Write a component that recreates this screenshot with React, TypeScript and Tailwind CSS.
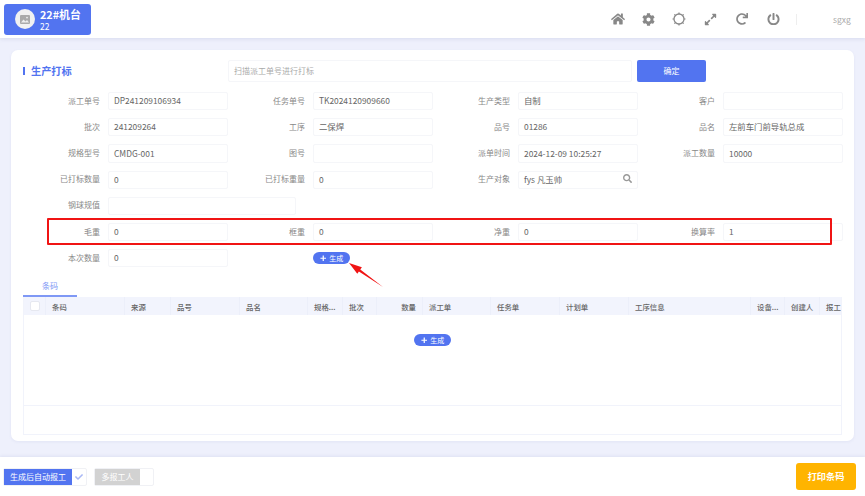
import { FaHome, FaCog, FaExpandAlt, FaRedo, FaPowerOff, FaPlus, FaSearch, FaCheck } from 'react-icons/fa'

const rows = [
  [['派工单号', 'DP241209106934'], ['任务单号', 'TK2024120909660'], ['生产类型', '自制'], ['客户', '']],
  [['批次', '241209264'], ['工序', '二保焊'], ['品号', '01286'], ['品名', '左前车门前导轨总成']],
  [['规格型号', 'CMDG-001'], ['图号', ''], ['派单时间', '2024-12-09 10:25:27'], ['派工数量', '10000']],
  [['已打标数量', '0'], ['已打标重量', '0'], ['生产对象', 'fys 凡玉帅'], null],
]

const weights = [['毛重', '0'], ['框重', '0'], ['净重', '0'], ['换算率', '1']]

const columns = [
  { name: '条码', width: 'w-[79px]' },
  { name: '来源', width: 'w-[46px]' },
  { name: '品号', width: 'w-[69px]' },
  { name: '品名', width: 'w-[68px]' },
  { name: '规格...', width: 'w-[35px]' },
  { name: '批次', width: 'w-[34px]' },
  { name: '数量', width: 'w-[46px]', right: true },
  { name: '派工单', width: 'w-[68px]' },
  { name: '任务单', width: 'w-[69px]' },
  { name: '计划单', width: 'w-[69px]' },
  { name: '工序信息', width: 'w-[122px]' },
  { name: '设备...', width: 'w-[34px]' },
  { name: '创建人', width: 'w-[35px]' },
  { name: '报工人', width: 'flex-1' },
]

function Field({ label, value, search }: { label: string; value: string; search?: boolean }) {
  return (
    <div className="flex items-center h-[18.2px]">
      <div className="w-[85px] pr-[8px] pb-[1px] text-right text-[8px] text-[#888] whitespace-nowrap">{label}</div>
      <div className="relative w-[120px] h-full flex items-center pl-[5px] pb-[1px] bg-white border border-[#f5f6f9] rounded-[2px] text-[#666]">
        {value}
        {search && <FaSearch className="absolute right-[5px] top-[2px] text-[9px] text-[#999]" />}
      </div>
    </div>
  )
}

function GenerateButton() {
  return (
    <button className="w-[37px] h-[12px] flex items-center justify-center gap-[3px] rounded-full bg-[#5274f0] text-white text-[7px]">
      <FaPlus className="text-[6.5px]" />
      生成
    </button>
  )
}

export default function App() {
  return (
    <div className="h-[496px] flex flex-col bg-[#eef0fc] text-[8.4px] font-['Noto_Sans_CJK_SC','Noto_Sans',sans-serif] overflow-hidden">
      <header className="h-[38px] shrink-0 flex items-center bg-white shadow-[0_1px_4px_rgba(90,100,160,0.15)] pl-[4px]">
        <div className="w-[87px] h-[31px] flex items-center gap-[5px] pl-[11px] bg-[#5274f0] rounded-[3px] text-white">
          <div className="w-[20px] h-[20px] rounded-full bg-[#f1f1f1] flex items-center justify-center">
            <svg width="10" height="9" viewBox="0 0 10 9">
              <rect width="10" height="9" rx="1" fill="#aaa" />
              <path d="M1 7.5 3.5 4.5 5.5 6.5 7 5 9 7.5z" fill="#eee" />
              <circle cx="7" cy="2.6" r="0.9" fill="#eee" />
            </svg>
          </div>
          <div className="pt-[1px]">
            <div className="text-[10.8px] font-bold leading-[13px]">22#机台</div>
            <div className="text-[8.5px] leading-[10px]">22</div>
          </div>
        </div>
        <div className="ml-auto flex items-center text-[#888]">
          <FaHome className="text-[14px] w-[14px] mr-[17px]" />
          <FaCog className="text-[13px] w-[13px] mr-[17px]" />
          <svg className="mr-[18px]" width="14" height="14" viewBox="0 0 14 14" fill="none" stroke="#888">
            <circle cx="7" cy="7" r="5" strokeWidth="1.3" />
            <path d="M7 0.5v1.5M7 12v1.5M0.5 7H2M12 7h1.5M2.4 2.4l1 1M10.6 10.6l1 1M11.6 2.4l-1 1M3.4 10.6l-1 1" strokeWidth="1.2" />
          </svg>
          <FaExpandAlt className="text-[13px] w-[13px] mr-[19px]" />
          <FaRedo className="text-[12px] w-[12px] mr-[19px]" />
          <FaPowerOff className="text-[12.5px] w-[13px] mr-[16px]" />
          <div className="w-px h-[11px] bg-[#eee] mr-[36px]" />
          <span className="text-[8.5px] text-[#aaa] w-[17px] mr-[15px] whitespace-nowrap">sgxg</span>
        </div>
      </header>

      <main className="flex-1 px-[11px] pt-[12px] pb-[16px] min-h-0">
        <div className="relative h-full bg-white rounded-[7px] px-[12px] pt-[10px] shadow-[0_1px_3px_rgba(90,100,160,0.08)]">
          <div className="flex items-center h-[22px]">
            <div className="w-[205px] flex items-center gap-[6px]">
              <span className="w-[2px] h-[8px] bg-[#5274f0]" />
              <span className="text-[10.2px] font-bold text-[#5274f0]">生产打标</span>
            </div>
            <div className="w-[404px] h-full flex items-center pl-[5px] border border-[#f5f6f9] rounded-[2px] text-[8px] text-[#aaa]">
              扫描派工单号进行打标
            </div>
            <button className="ml-[5px] w-[69px] h-full bg-[#5274f0] rounded-[2px] text-white text-[8px]">确定</button>
          </div>

          <div className="mt-[10px] grid grid-cols-[205px_205px_205px_205px] gap-y-[8px]">
            {rows.flat().map((f, i) =>
              f ? <Field key={i} label={f[0]} value={f[1]} search={f[0] === '生产对象'} /> : <div key={i} />,
            )}
            <div className="col-span-4 flex items-center h-[18.2px]">
              <div className="w-[85px] pr-[8px] pb-[1px] text-right text-[8px] text-[#888]">钢球规值</div>
              <div className="w-[188px] h-full border border-[#f5f6f9] rounded-[2px]" />
            </div>
            {weights.map((f) => (
              <Field key={f[0]} label={f[0]} value={f[1]} />
            ))}
            <Field label="本次数量" value="0" />
            <div className="pl-[85px] flex items-center">
              <GenerateButton />
            </div>
          </div>

          <div className="mt-[12px] w-[54px] h-[18px] flex items-center justify-center pb-[2px] text-[8px] text-[#7f98f5] border-b-2 border-[#7f98f5]">
            条码
          </div>

          <div className="h-[138px] flex flex-col border border-t-0 border-[#f1f3fb]">
            <div className="h-[18px] shrink-0 flex bg-[#f2f4fd] text-[#666] text-[7.4px] font-medium">
              <div className="w-[22px] flex items-center justify-center border-r border-[#eceffa]">
                <span className="w-[10px] h-[10px] bg-white border border-[#e6e8f0] rounded-[2px]" />
              </div>
              {columns.map((c) => (
                <div
                  key={c.name}
                  className={`${c.width} flex items-center px-[6px] border-r border-[#eceffa] whitespace-nowrap overflow-hidden last:border-r-0 ${c.right ? 'justify-end' : ''}`}
                >
                  {c.name}
                </div>
              ))}
            </div>
            <div className="h-[91px] flex justify-center pt-[19px] border-b border-[#f1f3fb]">
              <GenerateButton />
            </div>
          </div>

          <div className="absolute left-[36px] top-[168px] w-[785px] h-[27px] border-2 border-[#f01414] rounded-[1px]" />
          <svg className="absolute left-[337px] top-[208px]" width="38" height="32" viewBox="0 0 38 32">
            <path d="M1 5 13.9 9.2 12.3 11.5 35 29 10.9 13.5 9.3 15.8z" fill="#f01414" />
          </svg>
        </div>
      </main>

      <footer className="h-[39px] shrink-0 flex items-center bg-white shadow-[0_-1px_3px_rgba(90,100,160,0.1)] pl-[3px] pr-[9px]">
        <div className="flex items-center h-[18px] border border-[#f0f1f5] rounded-[2px] text-[8px]">
          <div className="w-[68px] h-full flex items-center justify-center bg-[#5274f0] text-white">生成后自动报工</div>
          <div className="w-[14px] flex justify-center">
            <FaCheck className="text-[8px] text-[#a9b8f5]" />
          </div>
        </div>
        <div className="ml-[7px] flex items-center h-[18px] border border-[#f0f1f5] rounded-[2px] text-[8px]">
          <div className="w-[45px] h-full flex items-center justify-center bg-[#d2d2d2] text-white">多报工人</div>
          <div className="w-[13px]" />
        </div>
        <button className="ml-auto w-[60px] h-[27px] bg-[#ffb400] rounded-[3px] text-white text-[9.2px] font-bold">打印条码</button>
      </footer>
    </div>
  )
}
